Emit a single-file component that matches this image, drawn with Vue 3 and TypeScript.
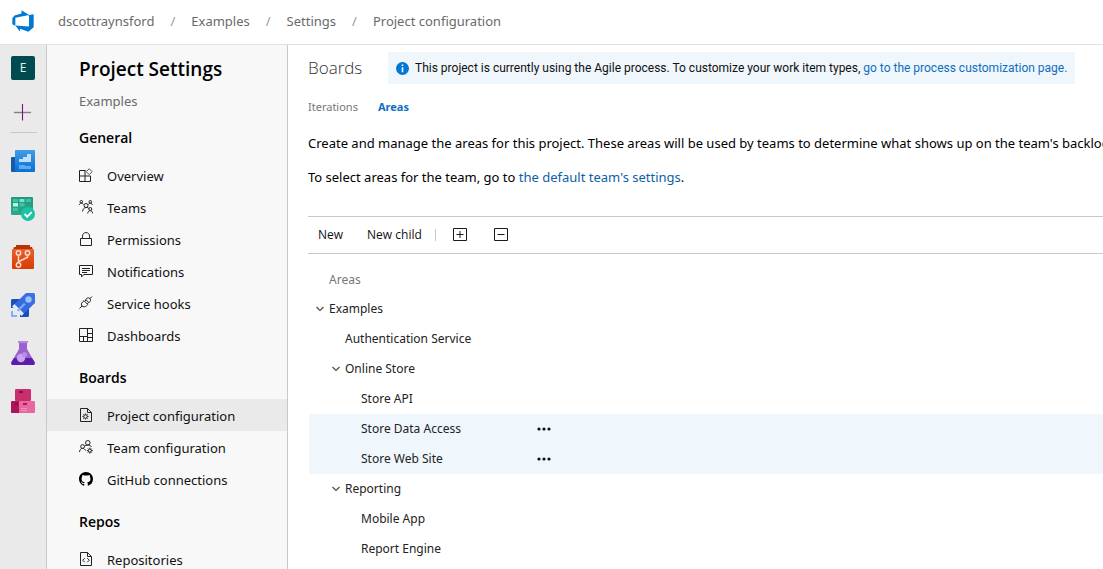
<script setup lang="ts">
import { computed, ref } from 'vue'

interface NavItem {
  label: string
  icon: string
}
interface NavGroup {
  title: string
  items: NavItem[]
}
interface AreaNode {
  name: string
  level: number
  expandable?: boolean
  active?: boolean
}

const crumbs = ['dscottraynsford', 'Examples', 'Settings', 'Project configuration']

const groups: NavGroup[] = [
  {
    title: 'General',
    items: [
      { label: 'Overview', icon: 'overview' },
      { label: 'Teams', icon: 'teams' },
      { label: 'Permissions', icon: 'lock' },
      { label: 'Notifications', icon: 'message' },
      { label: 'Service hooks', icon: 'plug' },
      { label: 'Dashboards', icon: 'dashboard' },
    ],
  },
  {
    title: 'Boards',
    items: [
      { label: 'Project configuration', icon: 'pageGear' },
      { label: 'Team configuration', icon: 'teamGear' },
      { label: 'GitHub connections', icon: 'github' },
    ],
  },
  {
    title: 'Repos',
    items: [{ label: 'Repositories', icon: 'pageCode' }],
  },
]

const selected = ref('Project configuration')

const nodes: AreaNode[] = [
  { name: 'Examples', level: 0, expandable: true },
  { name: 'Authentication Service', level: 1 },
  { name: 'Online Store', level: 1, expandable: true },
  { name: 'Store API', level: 2 },
  { name: 'Store Data Access', level: 2, active: true },
  { name: 'Store Web Site', level: 2, active: true },
  { name: 'Reporting', level: 1, expandable: true },
  { name: 'Mobile App', level: 2 },
  { name: 'Report Engine', level: 2 },
]

const collapsed = ref<string[]>([])

const visibleNodes = computed(() => {
  const shown: AreaNode[] = []
  let hiddenBelow = Infinity
  for (const node of nodes) {
    if (node.level > hiddenBelow) continue
    hiddenBelow = collapsed.value.includes(node.name) ? node.level : Infinity
    shown.push(node)
  }
  return shown
})

function toggle(name: string) {
  collapsed.value = collapsed.value.includes(name)
    ? collapsed.value.filter((n) => n !== name)
    : [...collapsed.value, name]
}
function expandAll() {
  collapsed.value = []
}
function collapseAll() {
  collapsed.value = nodes.filter((n) => n.expandable).map((n) => n.name)
}
</script>

<template>
  <div class="page">
    <header class="topbar">
      <a href="#" class="logo" aria-label="Azure DevOps">
        <svg width="24" height="24" viewBox="0 0 18 18" fill="#0078d4">
          <path d="M17 4v9.74l-4 3.28-6.2-2.26V17l-3.51-4.59 10.23.8V4.44zm-3.41.49L7.85 1v2.29L2.58 4.84 1 6.87v4.61l2.26 1V6.57z" />
        </svg>
      </a>
      <nav class="crumbs" aria-label="Breadcrumb">
        <template v-for="(crumb, i) in crumbs" :key="crumb">
          <span v-if="i > 0" class="slash">/</span>
          <a href="#">{{ crumb }}</a>
        </template>
      </nav>
    </header>

    <div class="body">
      <nav class="rail" aria-label="Services">
        <a href="#" class="tile">E</a>
        <button type="button" class="add" aria-label="Add">
          <svg width="24" height="24" viewBox="0 0 24 24">
            <path d="M3 12.5h17" stroke="#858080" stroke-width="1.4" />
            <path d="M11.5 4v16.500" stroke="#8a0a80" stroke-width="1.1" />
          </svg>
        </button>
        <span class="divider"></span>
        <a href="#" class="service" aria-label="Boards overview">
          <svg width="24" height="24" viewBox="0 0 24 24">
            <defs>
              <linearGradient id="gBlue" x1="0" y1="0" x2="0" y2="1"><stop offset="0" stop-color="#439ae8" /><stop offset="1" stop-color="#0a6fd4" /></linearGradient>
            </defs>
            <rect x="0" y="8" width="12" height="15" rx="1" fill="#155ca8" />
            <rect x="4" y="1" width="20" height="22" rx="1" fill="url(#gBlue)" />
            <path d="M8 13v-3h4V8h4V5h4v8z" fill="#bfe0fb" />
            <path d="M8 16h6v1h6v3H8z" fill="#5cabf0" />
          </svg>
        </a>
        <a href="#" class="service" aria-label="Boards">
          <svg width="24" height="24" viewBox="0 0 24 24">
            <defs>
              <linearGradient id="gGreen" x1="0" y1="0" x2="0" y2="1"><stop offset="0" stop-color="#1e9a80" /><stop offset="1" stop-color="#2ea78b" /></linearGradient>
            </defs>
            <rect x="0" y="0" width="22" height="18" rx="1" fill="url(#gGreen)" />
            <path d="M2 2h5v3H2zM15 2h5v3h-5zM8.500 6h5v3.500h-5zM2 11h5v3H2z" fill="#3fc3a2" />
            <path d="M8.500 2h5v3h-5z" fill="#7fe0c2" />
            <path d="M2 6h5v3.500H2z" fill="#b0f8e2" />
            <circle cx="17" cy="17" r="7" fill="#1cc3a6" />
            <path d="M13.500 17l2.700 2.700 4.500-4.500" fill="none" stroke="#fff" stroke-width="1.800" />
          </svg>
        </a>
        <a href="#" class="service" aria-label="Repos">
          <svg width="24" height="24" viewBox="0 0 24 24">
            <defs>
              <linearGradient id="gOrange" x1="0" y1="0" x2="0" y2="1"><stop offset="0" stop-color="#e8602c" /><stop offset="1" stop-color="#d83b01" /></linearGradient>
            </defs>
            <path d="M5 2V0h14v2h2l1 3H2l1-3z" fill="#b83408" />
            <rect x="1" y="4" width="22" height="20" rx="1" fill="url(#gOrange)" />
            <g fill="none" stroke="#ffd9c8" stroke-width="1.500">
              <circle cx="7.500" cy="8" r="2.200" />
              <circle cx="16.500" cy="8" r="2.200" />
              <circle cx="7.500" cy="20" r="2.200" />
              <path d="M7.500 10.200v7.600M16.500 10.200v2L8 16.500" />
            </g>
          </svg>
        </a>
        <a href="#" class="service" aria-label="Pipelines">
          <svg width="24" height="24" viewBox="0 0 24 24">
            <defs>
              <linearGradient id="gRocket" x1="1" y1="0" x2="0" y2="1"><stop offset="0" stop-color="#3c74e6" /><stop offset="1" stop-color="#2c66dc" /></linearGradient>
            </defs>
            <path d="M1 6h9v9H0V7z" fill="#1a4fbb" />
            <path d="M9 15h9v8l-1 1H9z" fill="#174dbd" />
            <path d="M15 0h8l1 1v9L13 20.500 3.500 11z" fill="url(#gRocket)" />
            <path d="M3.500 11l9.500 9.500-2.500 2.500L1 13.500z" fill="#dfe8fa" />
            <path d="M6 17l7-7 1.500 1.500-7 7z" fill="#85abf5" />
            <circle cx="17.500" cy="6.500" r="3.200" fill="#9dbcfa" />
            <path d="M0 18h2v4h4v2H0z" fill="#8aadf4" />
          </svg>
        </a>
        <a href="#" class="service" aria-label="Test Plans">
          <svg width="24" height="24" viewBox="0 0 24 24">
            <path d="M8 1h8v7l7.500 13c.8 1.600 0 3-1.800 3H2.300C.5 24-.3 22.600.5 21L8 8z" fill="#9a63d0" />
            <path d="M3 17h18l2.500 4c.8 1.600 0 3-1.800 3H2.300C.5 24-.3 22.600.5 21z" fill="#5c1ea8" />
            <path d="M7 0h10v2H7z" fill="#b78ae2" />
            <circle cx="10" cy="17" r="4.200" fill="#c9a2f2" />
            <circle cx="13.500" cy="13.500" r="2.600" fill="#b88bea" />
          </svg>
        </a>
        <a href="#" class="service" aria-label="Artifacts">
          <svg width="24" height="24" viewBox="0 0 24 24">
            <rect x="4" y="0" width="16" height="12" rx="1" fill="#cb2e6d" />
            <rect x="0" y="12" width="9" height="12" rx="1" fill="#ad1457" />
            <rect x="8" y="12" width="16" height="12" rx="1" fill="#e9679f" />
            <path d="M8 2h4v2H8zM4 14h3v2H4z" fill="#8a0c45" />
            <path d="M12 14h4v2h-4z" fill="#b3175a" />
            <path d="M10 19h6v1h-6zM10 21h6v1h-6z" fill="#f293ba" />
          </svg>
        </a>
      </nav>

      <aside class="sidebar">
        <h1>Project Settings</h1>
        <p class="sub">Examples</p>
        <section v-for="group in groups" :key="group.title">
          <h2>{{ group.title }}</h2>
          <ul>
            <li v-for="item in group.items" :key="item.label">
              <a href="#" :class="['item', { selected: item.label === selected }]" @click.prevent="selected = item.label">
                <svg width="14" height="16" viewBox="0 0 14 16" fill="none" stroke="#222" stroke-width="1">
                  <template v-if="item.icon === 'overview'">
                    <path d="M6.500 2.500h-6v11h11v-5.500h-11M6 2.500v11" />
                    <path d="M10.200.7l3 3-3 3-3-3z" stroke="#555" />
                  </template>
                  <template v-else-if="item.icon === 'teams'">
                    <circle cx="2.300" cy="1.800" r="1.300" />
                    <circle cx="11.300" cy="1.800" r="1.300" />
                    <circle cx="7" cy="5.500" r="2" />
                    <circle cx="11.300" cy="9" r="1.500" />
                    <path d="M.3 5c.3-1.200 1-1.900 2-1.900S4 3.600 4.600 4.500M9.400 4.500c.4-.9 1-1.400 1.900-1.400s1.800.7 2 1.900M3.500 11.500C4 9 5 7.700 7 7.500s2.300.6 2.900 1M8.700 13.500c.2-1.900 1.200-2.800 2.600-2.800s2.200.9 2.400 2.800" />
                  </template>
                  <template v-else-if="item.icon === 'lock'">
                    <path d="M1.500 6.500h11v7h-11zM3.500 6.500V4.200C3.500 2 4.900.6 7 .6s3.500 1.400 3.500 3.600v2.300" />
                  </template>
                  <template v-else-if="item.icon === 'message'">
                    <path d="M.5 1.500h13v9H5l-2.500 2.300v-2.300h-2zM3 4.500h8M3 6.500h8M3 8.500h5" />
                  </template>
                  <template v-else-if="item.icon === 'plug'">
                    <path d="M.5 12.500L3 10M10.500 3L13 .5M3 10c-1-1.500-.6-2.800.5-3.900L5 4.700l3.800 3.800-1.400 1.400C6.200 11 4.500 11.200 3 10zM5.600 5.300l1.600-1.500M8.200 7.900l1.500-1.500M6.700 3.400l1.200-1.100c1-.7 2-.6 2.900.2s1 2 .2 3L9.900 6.700z" />
                  </template>
                  <template v-else-if="item.icon === 'dashboard'">
                    <path d="M.5.500h13v13H.5zM8.500.5v13M.5 8.500h8M8.500 5.500h5M4.500 8.500v5M8.500 9.500h5" />
                  </template>
                  <template v-else-if="item.icon === 'pageGear'">
                    <path d="M1.500.5h7l4 4v9h-11zM8.500.5v4h4" />
                    <circle cx="6.500" cy="8.500" r="1.800" />
                    <path d="M6.500 5.500v1.200M6.500 10.300v1.200M3.500 8.500h1.200M8.300 8.500h1.200M4.400 6.400l.8.8M7.800 9.800l.8.8M4.400 10.600l.8-.8M7.800 7.200l.8-.8" />
                  </template>
                  <template v-else-if="item.icon === 'teamGear'">
                    <circle cx="8.800" cy="2.800" r="2.300" />
                    <circle cx="3.600" cy="6.500" r="1.900" />
                    <path d="M.5 12c.3-2.400 1.300-3.600 3.100-3.600 1.300 0 2.300.8 2.900 2.100M5.600 6.300C6.300 5.500 7.400 5 8.800 5c1.600 0 2.800.6 3.700 1.800" />
                    <circle cx="10.800" cy="10.600" r="1.600" />
                    <path d="M10.800 7.600v1.400M10.800 12.200v1.400M7.800 10.600h1.400M12.400 10.600h1.400M8.800 8.600l.8.8M12 11.800l.8.800M8.800 12.600l.8-.8M12 9.400l.8-.8" />
                  </template>
                  <template v-else-if="item.icon === 'github'">
                    <path
                      transform="scale(.875)"
                      fill="#000"
                      stroke="none"
                      d="M8 0C3.580 0 0 3.580 0 8c0 3.540 2.290 6.530 5.470 7.590.4.070.55-.17.55-.38 0-.19-.01-.82-.01-1.490-2.010.37-2.530-.49-2.690-.94-.09-.23-.48-.94-.82-1.130-.28-.15-.68-.52-.01-.53.63-.01 1.080.58 1.230.82.72 1.210 1.870.87 2.330.66.07-.52.28-.87.51-1.070-1.780-.2-3.640-.89-3.640-3.950 0-.87.31-1.590.82-2.150-.08-.2-.36-1.020.08-2.120 0 0 .67-.21 2.200.82.64-.18 1.320-.27 2-.27s1.360.09 2 .27c1.530-1.040 2.200-.82 2.200-.82.44 1.100.16 1.920.08 2.120.51.56.82 1.270.82 2.150 0 3.070-1.870 3.750-3.650 3.950.29.25.54.73.54 1.480 0 1.070-.01 1.930-.01 2.200 0 .21.15.46.55.38A8.010 8.010 0 0016 8c0-4.420-3.580-8-8-8z"
                    />
                  </template>
                  <template v-else>
                    <path d="M1.500.5h7l4 4v9h-11zM8.500.5v4h4" />
                    <path d="M5.700 6.200L3.700 8.200l2 2M8.300 6.200l2 2-2 2" />
                  </template>
                </svg>
                <span>{{ item.label }}</span>
              </a>
            </li>
          </ul>
        </section>
      </aside>

      <main class="main">
        <div class="heading">
          <h2>Boards</h2>
          <p class="banner">
            <svg width="13" height="13" viewBox="0 0 13 13">
              <circle cx="6.500" cy="6.500" r="6.500" fill="#0078d4" />
              <path d="M5.700 2.500h1.600v1.600H5.700zM5.700 5.200h1.600v5H5.700z" fill="#fff" />
            </svg>
            <span>This project is currently using the Agile process. To customize your work item types, <a href="#">go to the process customization page.</a></span>
          </p>
        </div>

        <nav class="tabs" aria-label="Boards settings">
          <a href="#">Iterations</a>
          <a href="#" class="current" aria-current="page">Areas</a>
        </nav>

        <div class="intro">
          <p>Create and manage the areas for this project. These areas will be used by teams to determine what shows up on the team's backlog</p>
          <p>To select areas for the team, go to <a href="#">the default team's settings</a>.</p>
        </div>

        <div class="toolbar" role="toolbar" aria-label="Area actions">
          <button type="button">New</button>
          <button type="button">New child</button>
          <span class="bar"></span>
          <button type="button" class="square" aria-label="Expand all" @click="expandAll">
            <svg width="14" height="14" viewBox="0 0 14 14" fill="none" stroke="#1a1a1a"><path d="M.5.500h13v12H.5zM3.500 6.500h7M7 3v7" /></svg>
          </button>
          <button type="button" class="square" aria-label="Collapse all" @click="collapseAll">
            <svg width="14" height="14" viewBox="0 0 14 14" fill="none" stroke="#1a1a1a"><path d="M.5.500h13v12H.5zM3.500 6.500h7" /></svg>
          </button>
        </div>

        <table class="tree">
          <thead>
            <tr>
              <th scope="col">Areas</th>
              <td></td>
            </tr>
          </thead>
          <tbody>
            <tr v-for="node in visibleNodes" :key="node.name" :class="{ active: node.active }">
              <td>
                <div :class="['node', 'level-' + node.level]">
                  <button v-if="node.expandable" type="button" class="chevron" :aria-label="'Toggle ' + node.name" @click="toggle(node.name)">
                    <svg width="8" height="6" viewBox="0 0 8 6" fill="none" stroke="#5c4a30" stroke-width="1.200"><path d="M.5 1L4 4.500 7.500 1" /></svg>
                  </button>
                  <span v-else class="chevron"></span>
                  <span>{{ node.name }}</span>
                </div>
              </td>
              <td>
                <button v-if="node.active" type="button" class="more" :aria-label="'Actions for ' + node.name">
                  <svg width="14" height="4" viewBox="0 0 14 4" fill="#111"><circle cx="2" cy="2" r="1.600" /><circle cx="7" cy="2" r="1.600" /><circle cx="12" cy="2" r="1.600" /></svg>
                </button>
              </td>
            </tr>
          </tbody>
        </table>
      </main>
    </div>
  </div>
</template>

<style>
body {
  margin: 0;
  overflow: hidden;
}
</style>

<style scoped>
.page {
  display: flex;
  flex-direction: column;
  height: 100vh;
  overflow: hidden;
  background: #fff;
  color: #111;
  font-family: "Noto Sans", "Open Sans", sans-serif;
  font-size: 13px;
  line-height: 20px;
}
h1,
h2,
p,
ul {
  margin: 0;
  padding: 0;
}
h1,
h2 {
  font-family: "Open Sans", "Noto Sans", sans-serif;
}
ul {
  list-style: none;
}
a {
  color: inherit;
  text-decoration: none;
}
button {
  margin: 0;
  padding: 0;
  border: 0;
  background: none;
  color: inherit;
  font: inherit;
  cursor: pointer;
}
svg {
  display: block;
  flex: none;
}

.topbar {
  display: flex;
  flex: none;
  align-items: center;
  height: 44px;
  padding-left: 11px;
  border-bottom: 1px solid #e1e1e1;
}
.logo {
  padding-bottom: 2px;
}
.crumbs {
  display: flex;
  gap: 16px;
  margin-left: 23px;
  padding-bottom: 2px;
  color: #6a6a6a;
  white-space: nowrap;
}
.slash {
  color: #999;
}

.body {
  display: flex;
  flex: 1;
  min-height: 0;
}
.rail {
  display: flex;
  flex: none;
  flex-direction: column;
  align-items: center;
  box-sizing: border-box;
  width: 47px;
  padding-top: 11px;
  border-right: 1px solid #c8c8c8;
  background: #eaeaea;
}
.tile {
  width: 24px;
  border-radius: 2px;
  background: #004b50;
  color: #e4eeee;
  font-size: 12px;
  line-height: 24px;
  text-align: center;
}
.add {
  margin-top: 20px;
}
.divider {
  width: 27px;
  height: 1px;
  margin: 8px 0 16px;
  background: #c8c8c8;
}
.service {
  margin-bottom: 24px;
}

.sidebar {
  flex: none;
  box-sizing: border-box;
  width: 241px;
  padding-top: 10px;
  overflow: hidden;
  border-right: 1px solid #c8c8c8;
  background: #f8f8f8;
}
.sidebar h1 {
  padding-left: 32px;
  color: #000;
  font-size: 19px;
  font-weight: 600;
  line-height: 28px;
}
.sub {
  margin-top: 8px;
  padding-left: 32px;
  color: #6a6a6a;
}
.sidebar h2 {
  box-sizing: border-box;
  height: 48px;
  padding: 5px 0 0 32px;
  color: #000;
  font-size: 14px;
  font-weight: 600;
  line-height: 44px;
}
.item {
  display: flex;
  align-items: center;
  gap: 14px;
  box-sizing: border-box;
  height: 32px;
  padding: 2px 0 0 32px;
}
.item.selected {
  background: #eaeaea;
}

.main {
  flex: 1;
  min-width: 0;
  padding: 7px 0 0 20px;
  overflow: hidden;
}
.heading {
  display: flex;
  align-items: center;
  white-space: nowrap;
}
.heading h2 {
  width: 80px;
  color: #333;
  font-size: 17px;
  font-weight: 300;
  line-height: 32px;
}
.banner {
  display: flex;
  align-items: center;
  gap: 6px;
  height: 32px;
  padding: 0 8px;
  background: #eff6fc;
  font-family: Roboto, "Open Sans", sans-serif;
  font-size: 12px;
}
.banner a {
  color: #106ebe;
}
.intro a {
  color: #0b61a4;
}
.tabs {
  display: flex;
  gap: 20px;
  margin-top: 13px;
  color: #777;
  font-size: 11px;
}
.current {
  color: #106ebe;
  font-weight: 700;
}
.intro {
  display: grid;
  gap: 14px;
  margin-top: 16px;
  color: #000;
  white-space: nowrap;
}
.toolbar {
  display: flex;
  align-items: center;
  height: 36px;
  margin-top: 29px;
  padding-left: 10px;
  border-top: 1px solid #c8c8c8;
  border-bottom: 1px solid #c8c8c8;
  font-family: "Open Sans", "Noto Sans", sans-serif;
  font-size: 12px;
}
.toolbar button + button {
  margin-left: 24px;
}
.bar {
  width: 1px;
  height: 12px;
  margin: 0 17px 0 13px;
  background: #c8c8c8;
}
.toolbar .square + .square {
  margin-left: 27px;
}

.tree {
  width: calc(100% - 1px);
  margin: 12px 0 0 1px;
  border-collapse: collapse;
  table-layout: fixed;
  color: #222;
  font-size: 12px;
}
.tree td,
.tree th {
  height: 30px;
  padding: 0;
  vertical-align: middle;
}
.tree thead td,
.tree thead th {
  height: 28px;
}
.tree th {
  box-sizing: border-box;
  width: 228px;
  padding-left: 20px;
  color: #777;
  font-weight: 400;
  text-align: left;
}
.active {
  background: #eff6fc;
}
.node {
  display: flex;
  align-items: center;
}
.level-1 {
  padding-left: 16px;
}
.level-2 {
  padding-left: 32px;
}
.chevron {
  display: flex;
  justify-content: center;
  width: 14px;
  margin-left: 4px;
  margin-right: 2px;
}
.more {
  display: block;
}
</style>
